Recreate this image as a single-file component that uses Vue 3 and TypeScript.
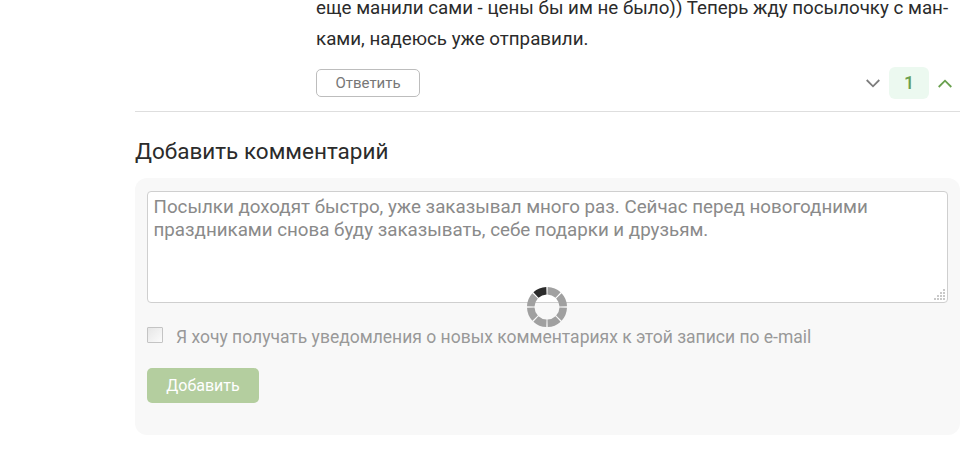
<script setup lang="ts">
const segments: number[] = [0, 45, 90, 135, 180, 225, 270, 315];
const gripDots: [number, number][] = [[9, 0], [6, 3], [9, 3], [3, 6], [6, 6], [9, 6], [0, 9], [3, 9], [6, 9], [9, 9]];
function segmentPath(i: number): string {
  const rad = (deg: number) => (deg * Math.PI) / 180;
  const a0 = rad(-90 + 45 * i + 2 - 45);
  const a1 = rad(-90 + 45 * i + 45 - 2 - 45);
  const R = 20, r = 12.5, c = 20;
  const p = (rr: number, a: number) => `${(c + rr * Math.cos(a)).toFixed(2)} ${(c + rr * Math.sin(a)).toFixed(2)}`;
  return `M${p(R, a0)}A${R} ${R} 0 0 1 ${p(R, a1)}L${p(r, a1)}A${r} ${r} 0 0 0 ${p(r, a0)}Z`;
}
</script>

<template>
  <div class="page">
    <section class="comment">
      <p class="comment-text">еще манили сами - цены бы им не было)) Теперь жду посылочку с ман-<br />ками, надеюсь уже отправили.</p>
      <div class="comment-actions">
        <button class="reply" type="button">Ответить</button>
        <div class="votes">
          <svg class="chev" width="14" height="9" viewBox="0 0 14 9"><path d="M.7 1 7 7.3 13.3 1" fill="none" stroke="#7d7d7d" stroke-width="1.8" /></svg>
          <span class="score">1</span>
          <svg class="chev" width="14" height="9" viewBox="0 0 14 9"><path d="M.7 8 7 1.7 13.3 8" fill="none" stroke="#69a04e" stroke-width="1.8" /></svg>
        </div>
      </div>
    </section>

    <h2 class="title">Добавить комментарий</h2>

    <form class="form" @submit.prevent>
      <div class="field">
        <textarea class="input" disabled placeholder="Посылки доходят быстро, уже заказывал много раз. Сейчас перед новогодними праздниками снова буду заказывать, себе подарки и друзьям."></textarea>
        <svg class="grip" width="11" height="11" viewBox="0 0 11 11">
          <rect v-for="(d, i) in gripDots" :key="i" :x="d[0]" :y="d[1]" width="2" height="2" fill="#c9c9c9" />
        </svg>
      </div>
      <label class="notify">
        <span class="box"></span>
        <span>Я хочу получать уведомления о новых комментариях к этой записи по e-mail</span>
      </label>
      <button class="submit" type="button">Добавить</button>
      <svg class="spinner" width="40" height="40" viewBox="0 0 40 40">
        <path v-for="(s, i) in segments" :key="s" :d="segmentPath(i)" :fill="i === 0 ? '#2b2b2b' : '#a0a0a0'" />
      </svg>
    </form>
  </div>
</template>

<style scoped>
.page {
  width: 972px;
  height: 476px;
  box-sizing: border-box;
  padding: 0 12px 0 135px;
  overflow: hidden;
  background: #fff;
  font-family: Roboto, "Liberation Sans", sans-serif;
}
.page::before {
  content: "";
  display: table;
}
.comment {
  margin-top: -7px;
  padding-left: 181px;
  padding-bottom: 12px;
  border-bottom: 1px solid #dedede;
}
.comment-text {
  margin: 0;
  font-size: 18.75px;
  line-height: 31px;
  color: #2b2b2b;
  white-space: nowrap;
}
.comment-actions {
  display: flex;
  justify-content: space-between;
  align-items: center;
  margin-top: 12px;
  height: 32px;
}
.reply {
  width: 104px;
  height: 28px;
  padding: 0;
  border: 1px solid #bdbdbd;
  border-radius: 5px;
  background: #fff;
  color: #777;
  font: 15px Roboto, sans-serif;
}
.votes {
  display: flex;
  align-items: center;
  gap: 9px;
  margin-right: 8px;
}
.score {
  width: 40px;
  height: 32px;
  border-radius: 6px;
  background: #ecf9f0;
  color: #69a04e;
  font-size: 18px;
  font-weight: 500;
  line-height: 32px;
  text-align: center;
}
.title {
  margin: 24px 0 0;
  font-size: 22.5px;
  line-height: 30px;
  font-weight: 400;
  color: #2b2b2b;
}
.form {
  position: relative;
  margin: 12px 0 0;
  height: 257px;
  box-sizing: border-box;
  padding: 13px 12px 0;
  border-radius: 12px;
  background: #f8f8f8;
}
.field {
  position: relative;
  height: 112px;
}
.input {
  display: block;
  width: 100%;
  height: 100%;
  box-sizing: border-box;
  padding: 4px 5.5px;
  border: 1px solid #cfcfcf;
  border-radius: 4px;
  background: #fff;
  resize: none;
  font: 18.75px/23px Roboto, sans-serif;
}
.input::placeholder {
  color: #8a8a8a;
  opacity: 1;
}
.grip {
  position: absolute;
  right: 3px;
  bottom: 3px;
}
.notify {
  display: flex;
  align-items: center;
  gap: 13px;
  margin-top: 22px;
  font-size: 17.5px;
  line-height: 24px;
  color: #999;
}
.box {
  width: 14px;
  height: 14px;
  margin-top: -4px;
  border: 1px solid #c4c4c4;
  border-radius: 1px;
  background: linear-gradient(135deg, #e6e6e6, #fbfbfb);
}
.submit {
  display: block;
  width: 112px;
  height: 35px;
  margin-top: 19px;
  padding: 0;
  border: 0;
  border-radius: 5px;
  background: #b4ce9f;
  color: #fff;
  font: 16px Roboto, sans-serif;
}
.spinner {
  position: absolute;
  left: 392px;
  top: 109px;
}
</style>
